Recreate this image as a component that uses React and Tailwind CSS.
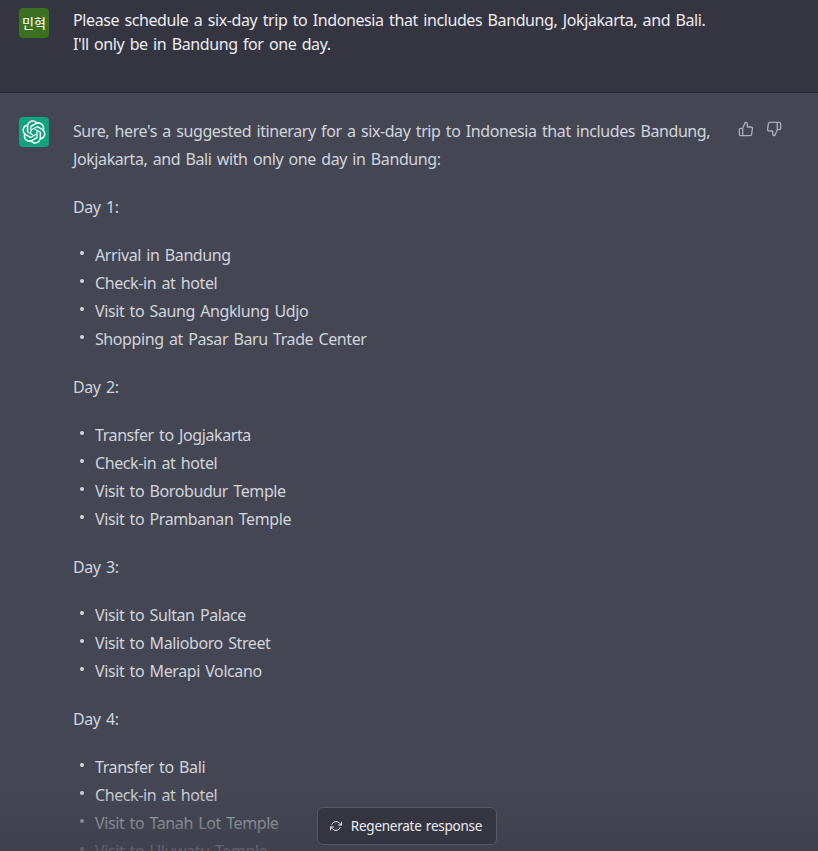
import React from "react";
import { FiRefreshCw, FiThumbsDown, FiThumbsUp } from "react-icons/fi";

const days = [
  { title: "Day 1:", items: ["Arrival in Bandung", "Check-in at hotel", "Visit to Saung Angklung Udjo", "Shopping at Pasar Baru Trade Center"] },
  { title: "Day 2:", items: ["Transfer to Jogjakarta", "Check-in at hotel", "Visit to Borobudur Temple", "Visit to Prambanan Temple"] },
  { title: "Day 3:", items: ["Visit to Sultan Palace", "Visit to Malioboro Street", "Visit to Merapi Volcano"] },
  { title: "Day 4:", items: ["Transfer to Bali", "Check-in at hotel", "Visit to Tanah Lot Temple", "Visit to Uluwatu Temple"] },
];

const OpenAiLogo = () => (
  <svg viewBox="0 0 41 41" fill="none" className="h-6 w-6 text-white">
    <path
      fill="currentColor"
      d="M37.5324 16.8707C37.9808 15.5241 38.1363 14.0974 37.9886 12.6859C37.8409 11.2744 37.3934 9.91076 36.676 8.68622C35.6126 6.83404 33.9882 5.3676 32.0373 4.4985C30.0864 3.62941 27.9098 3.40259 25.8215 3.85078C24.8796 2.7893 23.7219 1.94125 22.4257 1.36341C21.1295 0.785575 19.7249 0.491269 18.3058 0.500197C16.1708 0.495044 14.0893 1.16803 12.3614 2.42214C10.6335 3.67624 9.34853 5.44666 8.6917 7.47815C7.30085 7.76286 5.98686 8.3414 4.8377 9.17505C3.68854 10.0087 2.73073 11.0782 2.02839 12.312C0.956464 14.1591 0.498905 16.2988 0.721698 18.4228C0.944492 20.5467 1.83612 22.5449 3.268 24.1293C2.81966 25.4759 2.66413 26.9026 2.81182 28.3141C2.95951 29.7256 3.40701 31.0892 4.12437 32.3138C5.18791 34.1659 6.8123 35.6322 8.76321 36.5013C10.7141 37.3704 12.8907 37.5973 14.9789 37.1492C15.9208 38.2107 17.0786 39.0587 18.3747 39.6366C19.6709 40.2144 21.0755 40.5087 22.4946 40.4998C24.6307 40.5054 26.7133 39.8321 28.4418 38.5772C30.1704 37.3223 31.4556 35.5506 32.1119 33.5179C33.5027 33.2332 34.8167 32.6547 35.9659 31.821C37.115 30.9874 38.0728 29.9178 38.7752 28.684C39.8458 26.8371 40.3023 24.6979 40.0789 22.5748C39.8556 20.4517 38.9639 18.4544 37.5324 16.8707ZM22.4978 37.8849C20.7443 37.8874 19.0459 37.2733 17.6994 36.1501C17.7601 36.117 17.8666 36.0586 17.936 36.0161L25.9004 31.4156C26.1003 31.3019 26.2663 31.137 26.3813 30.9378C26.4964 30.7386 26.5563 30.5124 26.5549 30.2825V19.0542L29.9213 20.998C29.9389 21.0068 29.9541 21.0198 29.9656 21.0359C29.977 21.052 29.9842 21.0707 29.9867 21.0902V30.3889C29.9842 32.375 29.1946 34.2791 27.7909 35.6841C26.3872 37.0892 24.4838 37.8806 22.4978 37.8849ZM6.39227 31.0064C5.51397 29.4888 5.19742 27.7107 5.49804 25.9832C5.55718 26.0187 5.66048 26.0818 5.73461 26.1244L13.699 30.7248C13.8975 30.8408 14.1233 30.902 14.3532 30.902C14.583 30.902 14.8088 30.8408 15.0073 30.7248L24.731 25.1103V28.9979C24.7321 29.0177 24.7283 29.0376 24.7199 29.0556C24.7115 29.0736 24.6988 29.0893 24.6829 29.1012L16.6317 33.7497C14.9096 34.7416 12.8643 35.0097 10.9447 34.4954C9.02506 33.9811 7.38785 32.7263 6.39227 31.0064ZM4.29707 13.6194C5.17156 12.0998 6.55279 10.9364 8.19885 10.3327C8.19885 10.4013 8.19491 10.5228 8.19491 10.6071V19.808C8.19351 20.0378 8.25334 20.2638 8.36823 20.4629C8.48312 20.6619 8.64893 20.8267 8.84863 20.9404L18.5723 26.5542L15.206 28.4979C15.1894 28.5089 15.1703 28.5155 15.1505 28.5173C15.1307 28.5191 15.1107 28.516 15.0924 28.5082L7.04046 23.8557C5.32135 22.8601 4.06716 21.2235 3.55289 19.3046C3.03862 17.3858 3.30624 15.3413 4.29707 13.6194ZM31.955 20.0556L22.2312 14.4411L25.5976 12.4981C25.6142 12.4872 25.6333 12.4805 25.6531 12.4787C25.6729 12.4769 25.6928 12.4801 25.7111 12.4879L33.7631 17.1364C34.9967 17.849 36.0017 18.8982 36.6606 20.1613C37.3194 21.4244 37.6047 22.849 37.4832 24.2684C37.3617 25.6878 36.8382 27.0432 35.9743 28.1759C35.1103 29.3086 33.9415 30.1717 32.6047 30.6641C32.6047 30.5947 32.6047 30.4733 32.6047 30.3889V21.188C32.6066 20.9586 32.5474 20.7328 32.4332 20.5338C32.319 20.3348 32.154 20.1698 31.955 20.0556ZM35.3055 15.0128C35.2464 14.9765 35.1431 14.9142 35.069 14.8717L27.1045 10.2712C26.906 10.1554 26.6803 10.0943 26.4504 10.0943C26.2206 10.0943 25.9948 10.1554 25.7963 10.2712L16.0726 15.8858V11.9982C16.0715 11.9783 16.0753 11.9585 16.0837 11.9405C16.0921 11.9225 16.1048 11.9068 16.1207 11.8949L24.1719 7.25025C25.4053 6.53903 26.8158 6.19376 28.2383 6.25482C29.6608 6.31589 31.0364 6.78077 32.2044 7.59508C33.3723 8.40939 34.2842 9.53945 34.8334 10.8531C35.3826 12.1667 35.5464 13.6095 35.3055 15.0128ZM14.2424 21.9419L10.8752 19.9981C10.8576 19.9893 10.8423 19.9763 10.8309 19.9602C10.8195 19.9441 10.8122 19.9254 10.8098 19.9058V10.6071C10.8107 9.18295 11.2173 7.78848 11.9819 6.58696C12.7466 5.38544 13.8377 4.42659 15.1275 3.82264C16.4173 3.21869 17.8524 2.99464 19.2649 3.1767C20.6775 3.35876 22.0089 3.93941 23.1034 4.85067C23.0427 4.88379 22.937 4.94215 22.8668 4.98473L14.9024 9.58517C14.7025 9.69878 14.5366 9.86356 14.4215 10.0626C14.3065 10.2616 14.2466 10.4877 14.2479 10.7175L14.2424 21.9419ZM16.071 17.9991L20.4018 15.4978L24.7325 17.9975V22.9985L20.4018 25.4983L16.071 22.9985V17.9991Z"
    />
  </svg>
);

const App = () => {
  return (
    <div className="relative h-[851px] overflow-hidden bg-[#343541] font-['Noto_Sans','Noto_Sans_CJK_KR',sans-serif] text-base">
      {/* thread is scrolled a little, the user row starts above the fold */}
      <div className="-mt-4">
        <div className="flex gap-6 border-b border-[#2c2d36] bg-[#343541] pl-[19px] pr-[40px] pt-6 pb-[36px] text-[#ececf1]">
          <div className="flex h-[30px] w-[30px] shrink-0 items-center justify-center rounded-sm bg-[#3a701f] text-[13px] font-medium leading-none text-[#e8f0e0]">
            민혁
          </div>
          <div className="leading-6 tracking-[-0.4px] [word-spacing:1.6px]">
            Please schedule a six-day trip to Indonesia that includes Bandung, Jokjakarta, and Bali.
            <br />
            I'll only be in Bandung for one day.
          </div>
        </div>

        <div className="flex gap-6 bg-[#444654] pl-[19px] pt-6 text-[#d1d5db]">
          <div className="flex h-[30px] w-[30px] shrink-0 items-center justify-center rounded-sm bg-[#10a37f]">
            <OpenAiLogo />
          </div>
          <div className="w-[641px] shrink-0 leading-7 tracking-[-0.41px] [word-spacing:1.6px]">
            <p className="mb-5">
              Sure, here's a suggested itinerary for a six-day trip to Indonesia that includes Bandung, Jokjakarta, and Bali with only one day in Bandung:
            </p>
            {days.map((day) => (
              <div key={day.title}>
                <p className="mb-5">{day.title}</p>
                <ul className="mb-5 list-none">
                  {day.items.map((item, i) => (
                    <li key={i} className="relative pl-[22px]">
                      <span className="absolute left-[7px] top-[10px] h-1 w-1 rounded-full bg-[#d1d5db]" />
                      {item}
                    </li>
                  ))}
                </ul>
              </div>
            ))}
          </div>
          <div className="flex gap-3 pt-1 text-[#acacbe]">
            <FiThumbsUp size={16} />
            <FiThumbsDown size={16} />
          </div>
        </div>
      </div>

      <div className="absolute inset-x-0 bottom-0 flex h-[61px] items-start justify-center bg-gradient-to-b from-[#3e404c00] via-[#3e404c85] via-[54%] to-[#3e404ccc]">
        <button className="mt-[17px] ml-[-4px] flex h-[38px] w-[180px] items-center justify-center gap-[9px] rounded-md border border-[#565869] bg-[#343541] pr-[2px] text-[13.5px] tracking-[-0.25px] [word-spacing:1px] text-[#ececf1]">
          <FiRefreshCw size={12} />
          Regenerate response
        </button>
      </div>
    </div>
  );
};

export default App;
